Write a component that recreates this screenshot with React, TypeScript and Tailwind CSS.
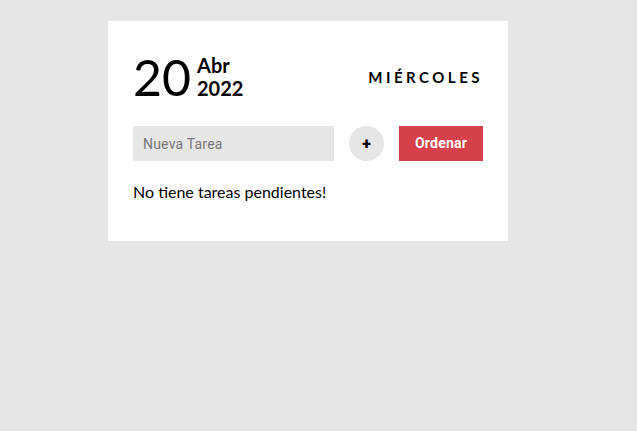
export default function App() {
  return (
    <div className="min-h-[431px] bg-[#e6e6e6] pt-[21px] font-['Lato',sans-serif]">
      <div className="ml-[108px] w-[400px] bg-white px-[25px] pt-[26px] pb-[38px]">
        <div className="flex items-center justify-between">
          <div className="flex items-center">
            <span className="text-[50px] leading-[60px] text-black">20</span>
            <div className="ml-[6px] flex flex-col text-[20px] font-bold leading-[23px] text-black">
              <span>Abr</span>
              <span>2022</span>
            </div>
          </div>
          <span className="text-[15px] font-bold tracking-[3.5px] text-black">MIÉRCOLES</span>
        </div>
        <div className="mt-[19px] flex items-center gap-[15px]">
          <input
            placeholder="Nueva Tarea"
            className="h-[35px] w-[201px] bg-[#e6e6e6] px-[10px] font-['Roboto',sans-serif] text-[14px] tracking-[0.2px] text-black outline-none placeholder:text-[#757575]"
          />
          <button className="flex h-[35px] w-[35px] items-center justify-center rounded-full bg-[#e6e6e6] font-['Roboto',sans-serif] text-[16px] font-black leading-none text-black">
            +
          </button>
          <button className="h-[35px] w-[84px] bg-[#d5404b] font-['Roboto',sans-serif] text-[14px] font-bold tracking-[0.2px] text-white">
            Ordenar
          </button>
        </div>
        <p className="mt-[20px] text-[16px] leading-[22px] text-black">No tiene tareas pendientes!</p>
      </div>
    </div>
  );
}
